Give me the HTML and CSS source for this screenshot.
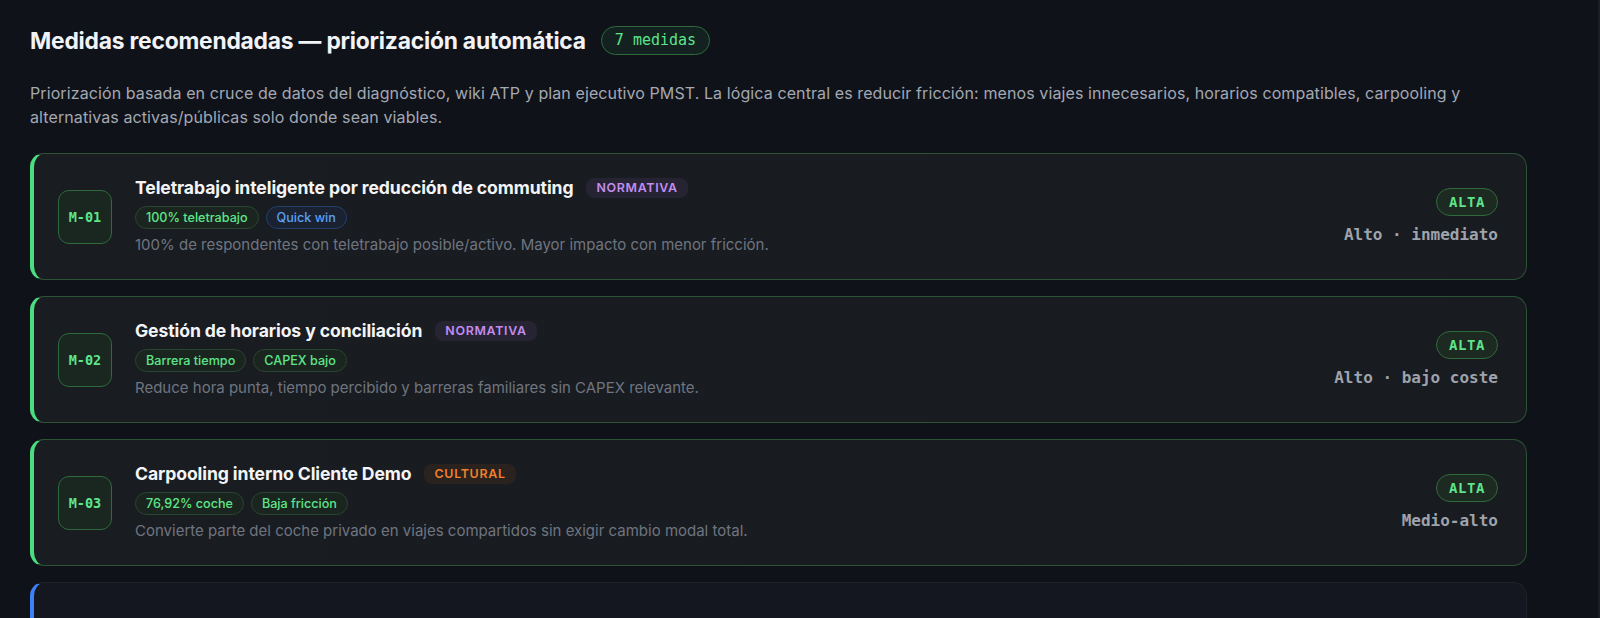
FILE: index.html
```html
<!DOCTYPE html>
<html lang="es">
<head>
<meta charset="utf-8">
<title>Medidas recomendadas</title>
<link rel="stylesheet" href="styles.css">
</head>
<body>
<main class="page">
  <header class="head">
    <h1 class="head-title">Medidas recomendadas — priorización automática</h1>
    <span class="count">7 medidas</span>
  </header>
  <p class="intro">Priorización basada en cruce de datos del diagnóstico, wiki ATP y plan ejecutivo PMST. La lógica central es reducir fricción: menos viajes innecesarios, horarios compatibles, carpooling y alternativas activas/públicas solo donde sean viables.</p>

  <section class="list">
    <article class="card card-green">
      <div class="code">M-01</div>
      <div class="body">
        <div class="title-row">
          <h2 class="title">Teletrabajo inteligente por reducción de commuting</h2>
          <span class="cat cat-norm">NORMATIVA</span>
        </div>
        <div class="tags">
          <span class="tag tag-green">100% teletrabajo</span>
          <span class="tag tag-blue">Quick win</span>
        </div>
        <p class="desc">100% de respondentes con teletrabajo posible/activo. Mayor impacto con menor fricción.</p>
      </div>
      <div class="side">
        <span class="prio">ALTA</span>
        <span class="impact">Alto · inmediato</span>
      </div>
    </article>

    <article class="card card-green">
      <div class="code">M-02</div>
      <div class="body">
        <div class="title-row">
          <h2 class="title">Gestión de horarios y conciliación</h2>
          <span class="cat cat-norm">NORMATIVA</span>
        </div>
        <div class="tags">
          <span class="tag tag-green">Barrera tiempo</span>
          <span class="tag tag-green">CAPEX bajo</span>
        </div>
        <p class="desc">Reduce hora punta, tiempo percibido y barreras familiares sin CAPEX relevante.</p>
      </div>
      <div class="side">
        <span class="prio">ALTA</span>
        <span class="impact">Alto · bajo coste</span>
      </div>
    </article>

    <article class="card card-green">
      <div class="code">M-03</div>
      <div class="body">
        <div class="title-row">
          <h2 class="title">Carpooling interno Cliente Demo</h2>
          <span class="cat cat-cult">CULTURAL</span>
        </div>
        <div class="tags">
          <span class="tag tag-green">76,92% coche</span>
          <span class="tag tag-green">Baja fricción</span>
        </div>
        <p class="desc">Convierte parte del coche privado en viajes compartidos sin exigir cambio modal total.</p>
      </div>
      <div class="side">
        <span class="prio">ALTA</span>
        <span class="impact">Medio-alto</span>
      </div>
    </article>

    <article class="card card-blue"></article>
  </section>
</main>
</body>
</html>
```

FILE: styles.css
```css
* { box-sizing: border-box; }

html, body {
  margin: 0;
  padding: 0;
  background: #10121a;
}

body {
  width: 1600px;
  height: 618px;
  overflow: hidden;
  border-right: 2px solid #1b1e27;
  font-family: Inter, "Noto Sans", "Liberation Sans", sans-serif;
  color: #e8eaee;
}

.page {
  padding: 26px 71px 0 30px;
}

.head {
  display: flex;
  align-items: center;
  gap: 15px;
  height: 28px;
}

.head-title {
  margin: 0;
  font-size: 22.8px;
  font-weight: 700;
  letter-spacing: -0.2px;
  color: #f1f3f6;
}

.count {
  display: inline-flex;
  align-items: center;
  height: 29px;
  padding: 0 13px;
  border: 1px solid #2f6a3a;
  border-radius: 15px;
  background: rgba(74, 222, 128, 0.08);
  color: #5ee58a;
  font-family: "DejaVu Sans Mono", "Liberation Mono", monospace;
  font-size: 15px;
}

.intro {
  margin: 27px 0 24px;
  font-size: 16px;
  letter-spacing: 0.1px;
  line-height: 24px;
  color: #a3a8b2;
}

.list {
  display: flex;
  flex-direction: column;
  gap: 16px;
}

.card {
  display: flex;
  align-items: center;
  gap: 23px;
  min-height: 127px;
  padding: 0 28px 0 24px;
  border: 1px solid #2c5434;
  border-left: 4px solid #4ade80;
  border-radius: 14px;
  background: linear-gradient(90deg, #191c20 0%, #181b20 100%);
}

.card-blue {
  border-color: #1f222c;
  border-left-color: #3b82f6;
  background: #141720;
}

.code {
  flex: 0 0 54px;
  height: 54px;
  display: flex;
  align-items: center;
  justify-content: center;
  border: 1px solid #2f6a3a;
  border-radius: 11px;
  background: #1a2620;
  color: #5ee58a;
  font-family: "DejaVu Sans Mono", "Liberation Mono", monospace;
  font-size: 13.5px;
  font-weight: 700;
}

.body {
  flex: 1;
  display: flex;
  flex-direction: column;
  gap: 6px;
  padding-bottom: 1px;
}

.title-row {
  display: flex;
  align-items: center;
  gap: 13px;
  margin-bottom: 2px;
}

.title {
  margin: 0;
  font-size: 17.6px;
  font-weight: 700;
  letter-spacing: -0.1px;
  color: #f3f4f6;
}

.cat {
  display: inline-flex;
  align-items: center;
  height: 20px;
  padding: 0 10px;
  border-radius: 8px;
  font-size: 12.4px;
  font-weight: 600;
  letter-spacing: 0.7px;
}

.cat-norm {
  color: #c48cf0;
  background: #262433;
}

.cat-cult {
  color: #f0802c;
  background: #2a221e;
}

.tags {
  display: flex;
  gap: 7px;
}

.tag {
  display: inline-flex;
  align-items: center;
  height: 23px;
  padding: 0 10px;
  border-radius: 12px;
  font-size: 12.6px;
  font-weight: 500;
}

.tag-green {
  color: #5ee58a;
  background: #1b251f;
  border: 1px solid #2a4532;
}

.tag-blue {
  color: #5aa2f8;
  background: #1a2130;
  border: 1px solid #24406a;
}

.desc {
  margin: 0;
  font-size: 15px;
  line-height: 20px;
  color: #6f7580;
}

.side {
  display: flex;
  flex-direction: column;
  align-items: flex-end;
  gap: 9px;
  padding-bottom: 2px;
}

.prio {
  display: inline-flex;
  align-items: center;
  height: 28px;
  padding: 0 12px;
  border: 1px solid #2f6a3a;
  border-radius: 14px;
  background: #1c2a22;
  color: #5ee58a;
  font-family: "DejaVu Sans Mono", "Liberation Mono", monospace;
  font-size: 14px;
  font-weight: 700;
  letter-spacing: 0.6px;
}

.impact {
  font-family: "DejaVu Sans Mono", "Liberation Mono", monospace;
  font-size: 16px;
  font-weight: 700;
  color: #9ea3ad;
}
```
